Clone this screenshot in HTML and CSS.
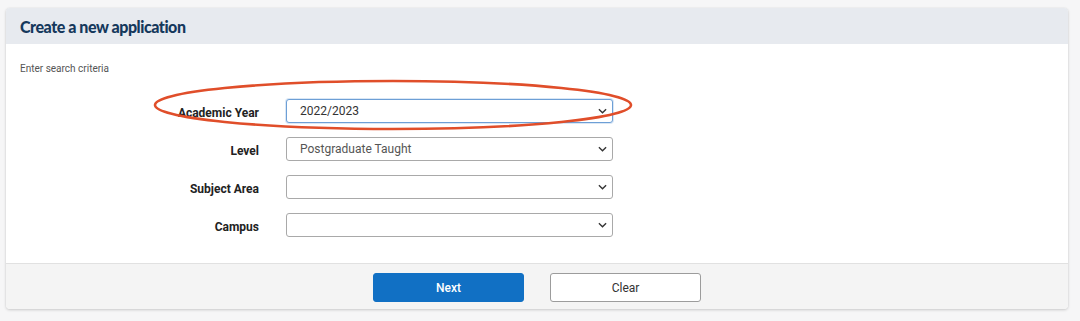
FILE: index.html
```html
<!DOCTYPE html>
<html>
<head>
<meta charset="utf-8">
<link rel="stylesheet" href="styles.css">
</head>
<body>
<div class="panel">
  <div class="panel-header">
    <h1 class="title">Create a new application</h1>
  </div>
  <div class="panel-body">
    <p class="hint">Enter search criteria</p>
    <div class="form">
      <label class="label">Academic Year</label>
      <div class="select focused"><span class="value">2022/2023</span><svg class="chev" viewBox="0 0 10 6" width="9" height="6"><path d="M1 1l4 4 4-4" fill="none" stroke="#333" stroke-width="1.5"/></svg></div>
      <label class="label">Level</label>
      <div class="select"><span class="value muted">Postgraduate Taught</span><svg class="chev" viewBox="0 0 10 6" width="9" height="6"><path d="M1 1l4 4 4-4" fill="none" stroke="#333" stroke-width="1.5"/></svg></div>
      <label class="label">Subject Area</label>
      <div class="select"><span class="value"></span><svg class="chev" viewBox="0 0 10 6" width="9" height="6"><path d="M1 1l4 4 4-4" fill="none" stroke="#333" stroke-width="1.5"/></svg></div>
      <label class="label">Campus</label>
      <div class="select"><span class="value"></span><svg class="chev" viewBox="0 0 10 6" width="9" height="6"><path d="M1 1l4 4 4-4" fill="none" stroke="#333" stroke-width="1.5"/></svg></div>
    </div>
  </div>
  <div class="panel-footer">
    <button class="btn btn-primary">Next</button>
    <button class="btn btn-secondary">Clear</button>
  </div>
  <svg class="annotation" width="490" height="56" viewBox="0 0 490 56">
    <ellipse cx="245" cy="28" rx="238" ry="24" fill="none" stroke="#e04e2a" stroke-width="2.6"/>
  </svg>
</div>
</body>
</html>
```
FILE: styles.css
```css
* { box-sizing: border-box; }
html, body { margin: 0; padding: 0; }
body {
  width: 1080px;
  height: 321px;
  background: #f6f6f7;
  font-family: Roboto, "Liberation Sans", Arial, sans-serif;
  padding: 8px 12px 12px 6px;
}
.panel {
  position: relative;
  width: 1062px;
  height: 301px;
  background: #fff;
  border-radius: 4px;
  box-shadow: 0 1px 3px rgba(0,0,0,0.18), 0 0 1px rgba(0,0,0,0.12);
  display: flex;
  flex-direction: column;
}
.panel-header {
  height: 36px;
  background: #e7eaef;
  border-radius: 4px 4px 0 0;
  display: flex;
  align-items: center;
  padding-left: 14px;
}
.title {
  margin: 0;
  font-family: Lato, "Open Sans", sans-serif;
  font-weight: 900;
  font-size: 16px;
  letter-spacing: -0.45px;
  color: #15385c;
}
.panel-body {
  flex: 1;
  padding-top: 18px;
}
.hint {
  margin: 0 0 24px 14px;
  font-size: 10px;
  color: #555;
  line-height: 13px;
}
.form {
  display: grid;
  grid-template-columns: 253px 327px;
  column-gap: 27px;
  row-gap: 14px;
}
.label {
  text-align: right;
  font-weight: 700;
  font-size: 12px;
  color: #222;
  align-self: center;
  padding-top: 3px;
}
.select {
  height: 24px;
  border: 1px solid #a9a9a9;
  border-radius: 3px;
  background: #fff;
  display: flex;
  align-items: center;
  justify-content: space-between;
  padding: 0 5px 0 13px;
}
.select.focused {
  border-color: #6d9fd6;
  box-shadow: 0 0 0 1px rgba(109,159,214,0.25);
}
.value {
  font-size: 12px;
  color: #333;
}
.value.muted { color: #555; }
.chev { flex: none; }
.panel-footer {
  height: 46px;
  background: #f4f4f4;
  border-top: 1px solid #e1e1e1;
  border-radius: 0 0 4px 4px;
  display: flex;
  justify-content: center;
  align-items: flex-start;
  gap: 26px;
  padding-top: 9px;
}
.btn {
  width: 151px;
  height: 29px;
  border-radius: 3px;
  font-family: Roboto, "Liberation Sans", Arial, sans-serif;
  font-size: 12px;
  cursor: pointer;
}
.btn-primary {
  background: #1170c4;
  color: #fff;
  border: 1px solid #1170c4;
  font-weight: 500;
}
.btn-secondary {
  background: #fff;
  color: #333;
  border: 1px solid #9c9c9c;
}
.annotation {
  position: absolute;
  left: 142px;
  top: 69px;
  pointer-events: none;
}
```
